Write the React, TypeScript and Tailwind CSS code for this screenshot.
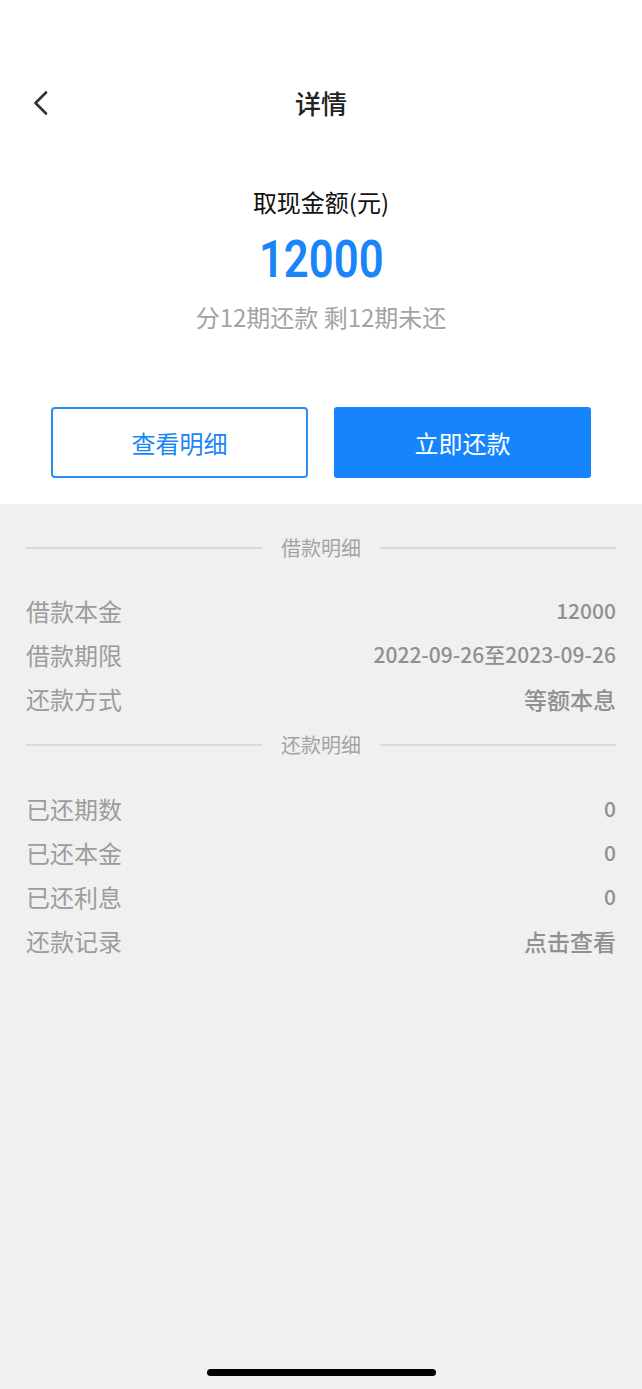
interface Row {
  label: string;
  value: string;
}

const loanRows: Row[] = [
  { label: "借款本金", value: "12000" },
  { label: "借款期限", value: "2022-09-26至2023-09-26" },
  { label: "还款方式", value: "等额本息" },
];

const repayRows: Row[] = [
  { label: "已还期数", value: "0" },
  { label: "已还本金", value: "0" },
  { label: "已还利息", value: "0" },
  { label: "还款记录", value: "点击查看" },
];

function SectionTitle({ title }: { title: string }) {
  return (
    <div className="flex h-[44px] items-center gap-[19px]">
      <div className="h-[2px] flex-1 bg-[#dadada]" />
      <span className="text-[20px] text-[#a3a3a3]">{title}</span>
      <div className="h-[2px] flex-1 bg-[#dadada]" />
    </div>
  );
}

function InfoRow({ row }: { row: Row }) {
  // digit strings look narrower in the design, so give them a smaller size
  const numeric = /\d/.test(row.value);
  return (
    <div className="flex h-[44px] items-center justify-between">
      <span className="text-[24px] text-[#9c9c9c]">{row.label}</span>
      <span
        className={
          numeric
            ? "text-[21px] font-medium text-[#909090]"
            : "text-[23px] font-medium text-[#909090]"
        }
      >
        {row.value}
      </span>
    </div>
  );
}

export default function App() {
  return (
    <div
      className="relative flex min-h-[1389px] flex-col bg-[#f0f0f0]"
      style={{ fontFamily: '"Noto Sans CJK SC", "Noto Sans", sans-serif' }}
    >
      {/* top card */}
      <div className="bg-white pt-[80px] pb-[26px]">
        <div className="relative flex h-[44px] items-center justify-center">
          <svg
            className="absolute left-[33px] top-[11px]"
            width="16"
            height="24"
            viewBox="0 0 16 24"
            fill="none"
            stroke="#333"
            strokeWidth="2.6"
            strokeLinecap="round"
            strokeLinejoin="round"
          >
            <polyline points="13,1.5 2.5,12 13,22.5" />
          </svg>
          <h1 className="text-[26px] font-medium text-[#222]">详情</h1>
        </div>

        <div className="mt-[61px] flex h-[34px] items-center justify-center text-[24px] text-[#111]">
          取现金额(元)
        </div>
        <div className="mt-[13px] flex h-[56px] items-center justify-center">
          <span
            className="inline-block scale-x-[0.84] text-[52px] font-semibold text-[#1a85f8]"
            style={{ fontFamily: "Roboto, sans-serif" }}
          >
            12000
          </span>
        </div>
        <div className="mt-[12px] flex h-[34px] items-center justify-center text-[24px] text-[#a3a3a3]">
          分12期还款 剩12期未还
        </div>

        <div className="mt-[73px] grid grid-cols-2 gap-[26px] px-[51px]">
          <button className="flex h-[71px] items-center justify-center rounded-[4px] border-2 border-[#2a8cf5] bg-white text-[24px] text-[#1a85f8]">
            查看明细
          </button>
          <button className="flex h-[71px] items-center justify-center rounded-[3px] bg-[#1685fd] text-[24px] text-white">
            立即还款
          </button>
        </div>
      </div>

      {/* details */}
      <div className="flex-1 px-[26px] pt-[22px]">
        <SectionTitle title="借款明细" />
        <div className="mt-[19px]">
          {loanRows.map((row) => (
            <InfoRow key={row.label} row={row} />
          ))}
        </div>
        <div className="mt-[2px]">
          <SectionTitle title="还款明细" />
        </div>
        <div className="mt-[20px]">
          {repayRows.map((row) => (
            <InfoRow key={row.label} row={row} />
          ))}
        </div>
      </div>

      <div className="absolute bottom-[13px] left-[207px] h-[7px] w-[229px] rounded-full bg-black" />
    </div>
  );
}
